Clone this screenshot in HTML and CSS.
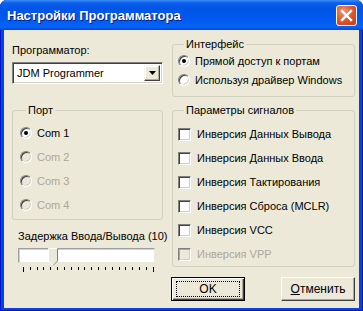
FILE: index.html
```html
<!DOCTYPE html>
<html lang="ru">
<head>
  <title>Настройки Программатора</title>
  <meta charset="utf-8">
  <link rel="stylesheet" href="styles.css">
</head>
<body>
  <div class="window">
    <div class="titlebar">
      <span class="title">Настройки Программатора</span>
      <span class="close">
        <svg width="13" height="13" viewBox="0 0 13 13">
          <path d="M2 2 L11 11 M11 2 L2 11" stroke="#FFFFFF" stroke-width="2.4" stroke-linecap="square"/>
        </svg>
      </span>
    </div>
    <div class="client">
      <div class="col col-left">
        <div class="field-label">Программатор:</div>
        <div class="combo">
          <span class="combo-text">JDM Programmer</span>
          <span class="combo-btn">
            <svg width="7" height="4" viewBox="0 0 7 4"><path d="M0 0 H7 L3.5 4 Z" fill="#000000"/></svg>
          </span>
        </div>
        <fieldset class="group group-port">
          <legend>Порт</legend>
          <div class="option"><span class="radio checked"></span>Com 1</div>
          <div class="option disabled"><span class="radio"></span>Com 2</div>
          <div class="option disabled"><span class="radio"></span>Com 3</div>
          <div class="option disabled"><span class="radio"></span>Com 4</div>
        </fieldset>
        <div class="field-label delay-label">Задержка Ввода/Вывода (10)</div>
        <div class="slider">
          <span class="thumb">
            <svg width="10" height="18" viewBox="0 0 10 18">
              <path d="M0.5 0.5 H9.5 V13 L5 17.5 L0.5 13 Z" fill="#ECE9D8" stroke="#FFFFFF"/>
              <path d="M9.5 0.5 V13 L5 17.5" fill="none" stroke="#808080"/>
            </svg>
          </span>
        </div>
        <div class="ticks">
          <i class="long"></i><i></i><i></i><i></i><i></i><i></i><i></i><i></i><i></i><i></i>
          <i></i><i></i><i></i><i></i><i></i><i></i><i></i><i></i><i></i><i class="long"></i>
        </div>
      </div>
      <div class="col col-right">
        <fieldset class="group group-iface">
          <legend>Интерфейс</legend>
          <div class="option"><span class="radio checked"></span>Прямой доступ к портам</div>
          <div class="option"><span class="radio"></span>Используя драйвер Windows</div>
        </fieldset>
        <fieldset class="group group-signals">
          <legend>Параметры сигналов</legend>
          <div class="option"><span class="check"></span>Инверсия Данных Вывода</div>
          <div class="option"><span class="check"></span>Инверсия Данных Ввода</div>
          <div class="option"><span class="check"></span>Инверсия Тактирования</div>
          <div class="option"><span class="check"></span>Инверсия Сброса (MCLR)</div>
          <div class="option"><span class="check"></span>Инверсия VCC</div>
          <div class="option disabled"><span class="check"></span>Инверсия VPP</div>
        </fieldset>
        <div class="buttons">
          <button type="button" class="button button-default"><span class="focus">OK</span></button>
          <button type="button" class="button"><span><u>О</u>тменить</span></button>
        </div>
      </div>
    </div>
  </div>
</body>
</html>
```
FILE: styles.css
```css
*, *::before, *::after {
  margin: 0;
  padding: 0;
  box-sizing: border-box;
}

html, body {
  width: 363px;
  height: 311px;
  overflow: hidden;
}

body {
  background-color: #FFFFFF;
  color: #000000;
  font-family: "Liberation Sans", Arial, sans-serif;
  font-size: 11px;
}

.window {
  display: flex;
  flex-direction: column;
  width: 363px;
  height: 311px;
  border-radius: 7px 7px 0 0;
  overflow: hidden;
  background-color: #0842D9;
  box-shadow: inset 1px 0 0 #0019CF, inset -1px 0 0 #001CA6, inset 0 -1px 0 #001CA6;
}

.titlebar {
  display: flex;
  align-items: center;
  justify-content: space-between;
  height: 30px;
  padding: 0 6px 0 7px;
  background: linear-gradient(to bottom, #3C8DF5 0%, #0A5EEB 10%, #0256E6 30%, #0058EE 60%, #0363F7 85%, #0560F0 92%, #0842D9 100%);
}

.title {
  color: #FFFFFF;
  font-weight: bold;
  font-size: 13px;
  text-shadow: 1px 1px 0 #0A1883;
}

.close {
  display: flex;
  align-items: center;
  justify-content: center;
  width: 21px;
  height: 21px;
  border: 1px solid #FFFFFF;
  border-radius: 3px;
  background: radial-gradient(circle at 35% 30%, #F29A7C 0%, #E2582F 45%, #C63A12 100%);
}

.client {
  display: flex;
  flex: 1;
  gap: 9px;
  margin: 0 4px 3px;
  padding: 0 4px 0 8px;
  background-color: #ECE9D8;
}

.col {
  display: flex;
  flex-direction: column;
}

.col-left {
  width: 151px;
  padding-top: 14px;
}

.col-right {
  width: 183px;
  padding-top: 8px;
}

.field-label {
  line-height: 13px;
  white-space: nowrap;
}

.combo {
  display: flex;
  align-items: center;
  justify-content: space-between;
  height: 22px;
  margin-top: 5px;
  border: 1px solid;
  border-color: #808080 #FFFFFF #FFFFFF #808080;
  box-shadow: inset 1px 1px 0 #404040, inset -1px -1px 0 #D4D0C8;
  background-color: #FFFFFF;
  padding: 0 2px 0 4px;
}

.combo-btn {
  display: flex;
  align-items: center;
  justify-content: center;
  width: 16px;
  height: 16px;
  background-color: #ECE9D8;
  border: 1px solid;
  border-color: #F4F3EE #404040 #404040 #F4F3EE;
  box-shadow: inset -1px -1px 0 #ACA899, inset 1px 1px 0 #FFFFFF;
}

.group {
  min-width: 0;
  border: 1px solid #D0D0BF;
  border-radius: 3px;
  display: flex;
  flex-direction: column;
}

.group legend {
  margin-left: 6px;
  padding: 0 2px;
  line-height: 13px;
}

.group-port {
  height: 116px;
  margin-top: 20px;
  padding: 8px 0 0 7px;
  gap: 8px;
}

.group-iface {
  padding: 2px 0 0 5px;
  gap: 3px;
  height: 59px;
}

.group-signals {
  margin-top: 7px;
  padding: 9px 0 0 5px;
  gap: 8px;
  height: 163px;
}

.option {
  display: flex;
  align-items: center;
  gap: 5px;
  height: 16px;
  line-height: 16px;
  white-space: nowrap;
}

.disabled {
  color: #ACA899;
}

.radio {
  width: 12px;
  height: 12px;
  border-radius: 50%;
  border: 1px solid;
  border-color: #808080 #FFFFFF #FFFFFF #808080;
  box-shadow: inset 1px 1px 0 #404040, inset -1px -1px 0 #D4D0C8;
  background-color: #FFFFFF;
  display: flex;
  align-items: center;
  justify-content: center;
}

.radio.checked::after {
  content: "";
  width: 4px;
  height: 4px;
  border-radius: 50%;
  background-color: #000000;
}

.disabled .radio {
  background-color: #ECE9D8;
}

.check {
  width: 13px;
  height: 13px;
  border: 1px solid;
  border-color: #808080 #FFFFFF #FFFFFF #808080;
  box-shadow: inset 1px 1px 0 #404040, inset -1px -1px 0 #D4D0C8;
  background-color: #FFFFFF;
  margin-right: 1px;
}

.disabled .check {
  background-color: #ECE9D8;
  box-shadow: inset 1px 1px 0 #ACA899, inset -1px -1px 0 #D4D0C8;
}

.delay-label {
  margin-top: 10px;
  margin-left: 6px;
}

.slider {
  position: relative;
  width: 137px;
  height: 15px;
  margin: 5px 0 0 6px;
  background-color: #FFFFFF;
  border: 1px solid;
  border-color: #A0A0A0 #ECE9D8 #ECE9D8 #A0A0A0;
  box-shadow: inset 1px 1px 0 #D4D0C8;
}

.thumb {
  position: absolute;
  left: 29px;
  top: -1px;
  line-height: 0;
}

.ticks {
  display: flex;
  justify-content: space-between;
  align-items: flex-start;
  width: 131px;
  height: 5px;
  margin: 4px 0 0 11px;
}

.ticks i {
  width: 1px;
  height: 3px;
  background-color: #000000;
}

.ticks i.long {
  height: 5px;
}

.buttons {
  display: flex;
  justify-content: space-between;
  margin-top: 10px;
  margin-left: -1px;
}

.button {
  width: 74px;
  height: 24px;
  border: 1px solid;
  border-color: #FFFFFF #404040 #404040 #FFFFFF;
  box-shadow: inset -1px -1px 0 #ACA899;
  background-color: #ECE9D8;
  font-family: inherit;
  font-size: 12px;
  color: #000000;
  display: flex;
  align-items: center;
  justify-content: center;
}

.button-default {
  border: 1px solid #000000;
  box-shadow: inset 1px 1px 0 #FFFFFF, inset -1px -1px 0 #404040, inset -2px -2px 0 #ACA899;
}

.focus {
  width: 64px;
  height: 16px;
  border: 1px dotted #000000;
  line-height: 14px;
  text-align: center;
}
```
